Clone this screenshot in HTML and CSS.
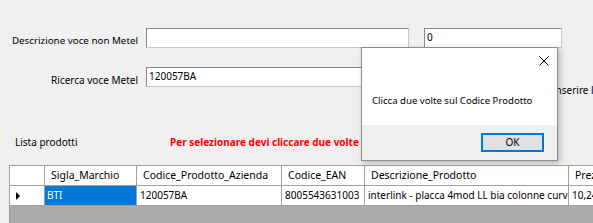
FILE: index.html
```html
<!DOCTYPE html>
<html>
<head>
<meta charset="utf-8">
<link rel="stylesheet" href="styles.css">
</head>
<body>
<div class="form">
  <div class="row row1">
    <label class="lbl">Descrizione voce non Metel</label>
    <div class="tb tb-desc"></div>
    <div class="tb tb-qty">0</div>
  </div>
  <div class="row row2">
    <label class="lbl lbl2">Ricerca voce Metel</label>
    <div class="tb tb-search">120057BA</div>
    <span class="hint">inserire la voce</span>
  </div>
  <div class="row row3">
    <span class="lista">Lista prodotti</span>
    <span class="warn">Per selezionare devi cliccare due volte il Codice Prodotto</span>
  </div>
  <div class="grid">
    <div class="grow ghead">
      <div class="c c0"></div>
      <div class="c c1">Sigla_Marchio</div>
      <div class="c c2">Codice_Prodotto_Azienda</div>
      <div class="c c3">Codice_EAN</div>
      <div class="c c4">Descrizione_Prodotto</div>
      <div class="c c5">Prezzo</div>
    </div>
    <div class="grow gdata">
      <div class="c c0"><span class="tri"></span></div>
      <div class="c c1 sel">BTI</div>
      <div class="c c2">120057BA</div>
      <div class="c c3">8005543631003</div>
      <div class="c c4">interlink - placca 4mod LL bia colonne curv</div>
      <div class="c c5">10,24</div>
    </div>
  </div>
</div>

<div class="dialog">
  <div class="dlg-body">
    <div class="dlg-close">
      <svg width="10" height="10" viewBox="0 0 10 10"><path d="M0.5 0.5 L9.5 9.5 M9.5 0.5 L0.5 9.5" stroke="#000" stroke-width="1" fill="none"/></svg>
    </div>
    <div class="dlg-msg">Clicca due volte sul Codice Prodotto</div>
  </div>
  <div class="dlg-foot">
    <div class="btn">OK</div>
  </div>
</div>
</body>
</html>
```
FILE: styles.css
```css
html, body {
  margin: 0;
  padding: 0;
  width: 593px;
  height: 223px;
  overflow: hidden;
  background: #f0f0f0;
  font-family: "Noto Sans", "DejaVu Sans", sans-serif;
  font-size: 10px;
  color: #000;
}
.form {
  position: relative;
  padding-top: 28px;
  width: 593px;
  overflow: hidden;
}
.row {
  display: flex;
  align-items: flex-start;
  white-space: nowrap;
}
.lbl {
  width: 138px;
  text-align: right;
  padding-top: 5px;
  line-height: 16px;
  flex: none;
}
.row1 .lbl { font-size: 9.8px; }
.tb {
  flex: none;
  box-sizing: border-box;
  height: 20px;
  background: #fff;
  border: 1px solid #7a7a7a;
  border-color: #8a8a8a #c8c8c8 #c8c8c8 #8a8a8a;
  padding: 0 2px;
  line-height: 17px;
  margin-left: 8px;
}
.tb-desc { width: 263px; }
.tb-qty { width: 138px; margin-left: 15px; }
.row2 { margin-top: 18px; }
.tb-search { width: 400px; }
.hint {
  margin-left: 7px;
  padding-top: 15px;
  line-height: 16px;
}
.row3 {
  margin-top: 36px;
  line-height: 16px;
}
.lista { margin-left: 15px; width: 155px; flex: none; }
.warn { color: #ff0000; font-weight: bold; }
.grid {
  margin-top: 15px;
  margin-left: 9px;
  height: 60px;
  background: #ababab;
  border-top: 1px solid #a0a0a0;
  border-left: 1px solid #a0a0a0;
  overflow: hidden;
}
.grow {
  display: flex;
  height: 20px;
  background: #fff;
  border-bottom: 1px solid #a0a0a0;
  box-sizing: border-box;
}
.c {
  flex: none;
  box-sizing: border-box;
  border-right: 1px solid #a0a0a0;
  line-height: 19px;
  white-space: nowrap;
  overflow: hidden;
  padding-left: 3px;
}
.ghead .c { padding-left: 6px; font-size: 10.5px; }
.c0 { width: 35px; position: relative; }
.c1 { width: 92px; }
.c2 { width: 145px; }
.c3 { width: 83px; }
.c4 { width: 204px; }
.c5 { width: 24px; border-right: none; }
.gdata .c1.sel {
  background: #0078d7;
  color: #fff;
  padding-left: 2px;
}
.tri {
  display: block;
  width: 0;
  height: 0;
  margin: 6px 0 0 3px;
  border-top: 4px solid transparent;
  border-bottom: 4px solid transparent;
  border-left: 4px solid #000;
}
.dialog {
  position: absolute;
  left: 361px;
  top: 47px;
  width: 197px;
  height: 114px;
  box-sizing: border-box;
  border: 1px solid #8e8e8e;
  background: #f0f0f0;
  box-shadow: 2px 2px 6px rgba(0,0,0,0.25);
  display: flex;
  flex-direction: column;
}
.dlg-body {
  background: #fff;
  height: 77px;
  position: relative;
}
.dlg-close {
  position: absolute;
  right: 8px;
  top: 8px;
  width: 10px;
  height: 10px;
}
.dlg-close svg { display: block; }
.dlg-msg {
  padding: 45px 0 0 10px;
  line-height: 16px;
  white-space: nowrap;
  font-size: 9.6px;
}
.dlg-foot {
  flex: 1;
  display: flex;
  justify-content: flex-end;
  align-items: flex-start;
  padding: 8px 13px 0 0;
}
.btn {
  box-sizing: border-box;
  width: 63px;
  height: 19px;
  border: 2px solid #0078d7;
  background: #e1e1e1;
  text-align: center;
  line-height: 15px;
}
```
